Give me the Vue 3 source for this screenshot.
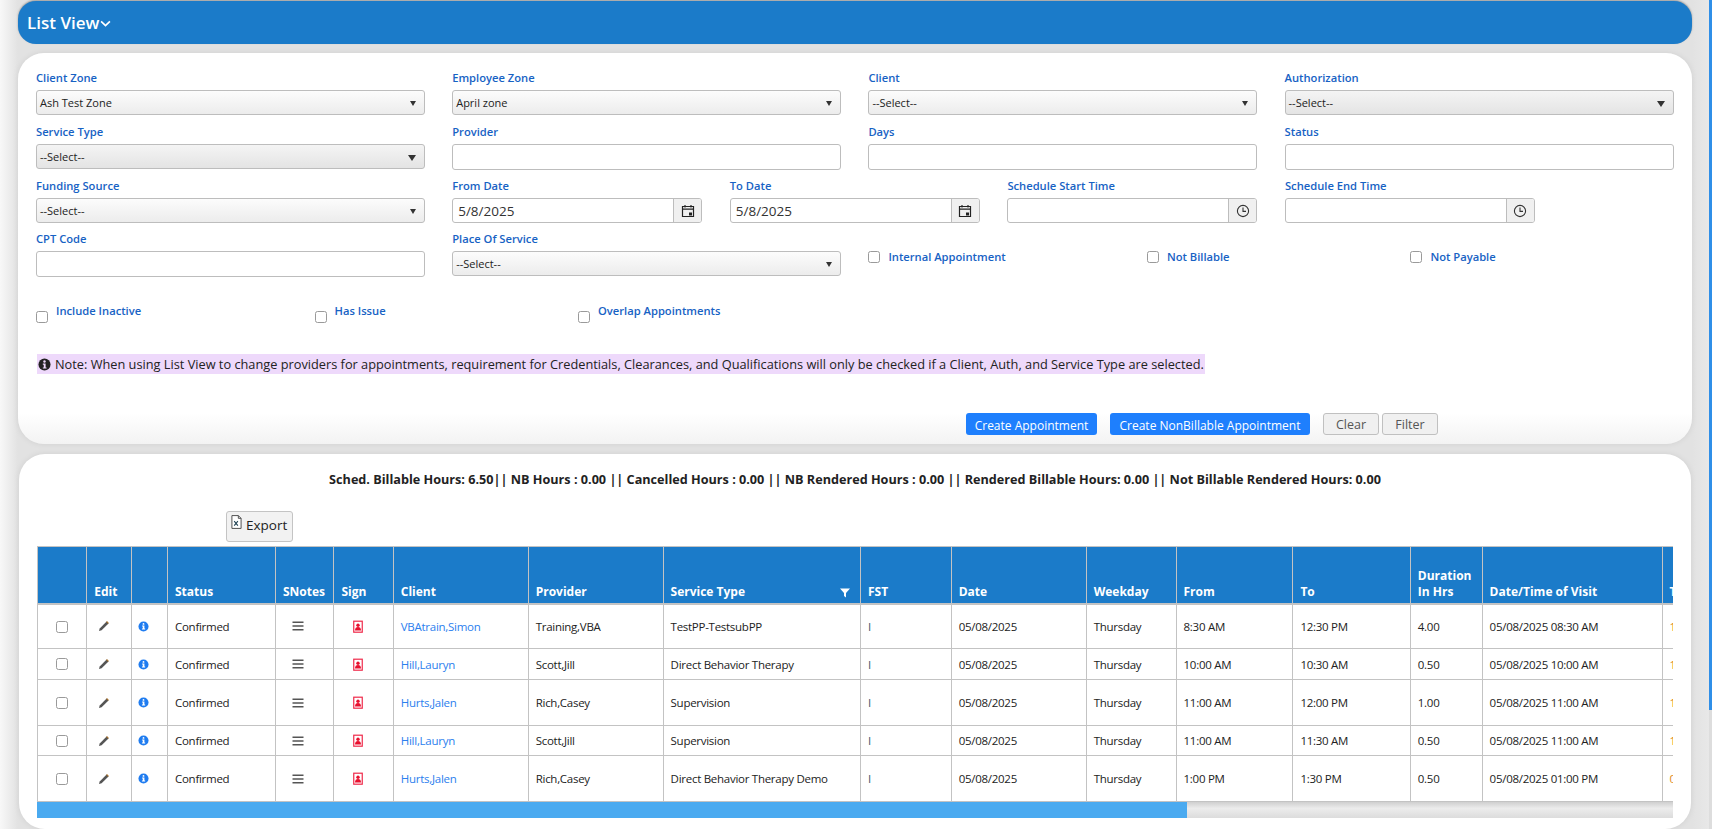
<script setup>
const columns = [
  { label: '', width: 49.2 },
  { label: 'Edit', width: 45 },
  { label: '', width: 35.8 },
  { label: 'Status', width: 108 },
  { label: 'SNotes', width: 58.5 },
  { label: 'Sign', width: 59.3 },
  { label: 'Client', width: 134.9 },
  { label: 'Provider', width: 134.9 },
  { label: 'Service Type', width: 197.4, filter: true },
  { label: 'FST', width: 90.7 },
  { label: 'Date', width: 135 },
  { label: 'Weekday', width: 89.9 },
  { label: 'From', width: 116.9 },
  { label: 'To', width: 117.4 },
  { label: 'Duration In Hrs', width: 71.8 },
  { label: 'Date/Time of Visit', width: 179.9 },
  { label: 'T', width: 90 }
]
const rows = [
  { h: 45, client: 'VBAtrain,Simon', provider: 'Training,VBA', service: 'TestPP-TestsubPP', from: '8:30 AM', to: '12:30 PM', dur: '4.00', visit: '05/08/2025 08:30 AM', last: '1' },
  { h: 31, client: 'Hill,Lauryn', provider: 'Scott,Jill', service: 'Direct Behavior Therapy', from: '10:00 AM', to: '10:30 AM', dur: '0.50', visit: '05/08/2025 10:00 AM', last: '1' },
  { h: 46, client: 'Hurts,Jalen', provider: 'Rich,Casey', service: 'Supervision', from: '11:00 AM', to: '12:00 PM', dur: '1.00', visit: '05/08/2025 11:00 AM', last: '1' },
  { h: 30, client: 'Hill,Lauryn', provider: 'Scott,Jill', service: 'Supervision', from: '11:00 AM', to: '11:30 AM', dur: '0.50', visit: '05/08/2025 11:00 AM', last: '1' },
  { h: 46, client: 'Hurts,Jalen', provider: 'Rich,Casey', service: 'Direct Behavior Therapy Demo', from: '1:00 PM', to: '1:30 PM', dur: '0.50', visit: '05/08/2025 01:00 PM', last: '0' }
]
</script>

<template>
  <div class="page">
    <div class="scroll-edge"><div class="scroll-thumb"></div></div>

    <header class="title-bar">
      <span class="title">List View</span>
      <svg class="chevron" viewBox="0 0 10 6" width="11" height="7"><path d="M1 1l4 4 4-4" fill="none" stroke="#fff" stroke-width="1.5" /></svg>
    </header>

    <section class="panel filters">
      <div class="form-grid">
        <div class="field">
          <label>Client Zone</label>
          <div class="select"><span>Ash Test Zone</span><i></i></div>
        </div>
        <div class="field">
          <label>Employee Zone</label>
          <div class="select"><span>April zone</span><i></i></div>
        </div>
        <div class="field">
          <label>Client</label>
          <div class="select"><span>--Select--</span><i></i></div>
        </div>
        <div class="field">
          <label>Authorization</label>
          <div class="select dark"><span>--Select--</span><i></i></div>
        </div>

        <div class="field">
          <label>Service Type</label>
          <div class="select dark"><span>--Select--</span><i></i></div>
        </div>
        <div class="field">
          <label>Provider</label>
          <input class="input" type="text" />
        </div>
        <div class="field">
          <label>Days</label>
          <input class="input" type="text" />
        </div>
        <div class="field">
          <label>Status</label>
          <input class="input" type="text" />
        </div>

        <div class="field">
          <label>Funding Source</label>
          <div class="select"><span>--Select--</span><i></i></div>
        </div>
        <div class="date-row">
          <div class="field">
            <label>From Date</label>
            <div class="group">
              <div class="group-text">5/8/2025</div>
              <div class="addon">
                <svg viewBox="0 0 14 14" width="14" height="14"><path d="M1.500 2.500h11v10h-11zM1.500 5.200h11M4 1v2.500M10 1v2.500" fill="none" stroke="#222" stroke-width="1.200" /><rect x="8" y="8.500" width="3" height="3" fill="#222" /></svg>
              </div>
            </div>
          </div>
          <div class="field">
            <label>To Date</label>
            <div class="group">
              <div class="group-text">5/8/2025</div>
              <div class="addon">
                <svg viewBox="0 0 14 14" width="14" height="14"><path d="M1.500 2.500h11v10h-11zM1.500 5.200h11M4 1v2.500M10 1v2.500" fill="none" stroke="#222" stroke-width="1.200" /><rect x="8" y="8.500" width="3" height="3" fill="#222" /></svg>
              </div>
            </div>
          </div>
          <div class="field">
            <label>Schedule Start Time</label>
            <div class="group">
              <div class="group-text"></div>
              <div class="addon">
                <svg viewBox="0 0 14 14" width="14" height="14"><circle cx="7" cy="7" r="5.600" fill="none" stroke="#333" stroke-width="1.100" /><path d="M7 3.500V7.400h3" fill="none" stroke="#333" stroke-width="1.100" /></svg>
              </div>
            </div>
          </div>
          <div class="field">
            <label>Schedule End Time</label>
            <div class="group">
              <div class="group-text"></div>
              <div class="addon">
                <svg viewBox="0 0 14 14" width="14" height="14"><circle cx="7" cy="7" r="5.600" fill="none" stroke="#333" stroke-width="1.100" /><path d="M7 3.500V7.400h3" fill="none" stroke="#333" stroke-width="1.100" /></svg>
              </div>
            </div>
          </div>
        </div>

        <div class="field">
          <label>CPT Code</label>
          <input class="input" type="text" />
        </div>
        <div class="field">
          <label>Place Of Service</label>
          <div class="select"><span>--Select--</span><i></i></div>
        </div>
        <div class="check-row inline">
          <label class="check"><input type="checkbox" /><span>Internal Appointment</span></label>
          <label class="check"><input type="checkbox" /><span>Not Billable</span></label>
          <label class="check"><input type="checkbox" /><span>Not Payable</span></label>
        </div>
      </div>

      <div class="check-row second">
        <label class="check low"><input type="checkbox" /><span>Include Inactive</span></label>
        <label class="check low"><input type="checkbox" /><span>Has Issue</span></label>
        <label class="check low"><input type="checkbox" /><span>Overlap Appointments</span></label>
      </div>

      <p class="note">
        <svg viewBox="0 0 14 14" width="13" height="13"><circle cx="7" cy="7" r="6.500" fill="#222" /><circle cx="7" cy="3.700" r="1.300" fill="#eed9fb" /><path d="M5.200 6h3v4.200h1v1.200H5.200v-1.200h1V7.200h-1z" fill="#eed9fb" /></svg>
        <span>Note: When using List View to change providers for appointments, requirement for Credentials, Clearances, and Qualifications will only be checked if a Client, Auth, and Service Type are selected.</span>
      </p>

      <div class="actions">
        <button class="btn primary first" type="button">Create Appointment</button>
        <button class="btn primary" type="button">Create NonBillable Appointment</button>
        <button class="btn plain clear" type="button">Clear</button>
        <button class="btn plain" type="button">Filter</button>
      </div>
    </section>

    <section class="panel results">
      <p class="summary">Sched. Billable Hours: 6.50|| NB Hours : 0.00 || Cancelled Hours : 0.00 || NB Rendered Hours : 0.00 || Rendered Billable Hours: 0.00 || Not Billable Rendered Hours: 0.00</p>

      <button class="export" type="button">
        <svg viewBox="0 0 12 15" width="11" height="14"><path d="M1 .5h7l3 3v11H1z" fill="#fff" stroke="#444" /><path d="M8 .5v3h3" fill="none" stroke="#444" /><path d="M3.500 6.500l4 5M7.500 6.500l-4 5" stroke="#245" stroke-width="1.200" /></svg>
        <span>Export</span>
      </button>

      <div class="table-wrap">
        <table class="grid">
          <colgroup>
            <col v-for="(c, i) in columns" :key="i" :style="{ width: c.width + 'px' }" />
          </colgroup>
          <thead>
            <tr>
              <th v-for="(c, i) in columns" :key="i">
                {{ c.label }}
                <svg v-if="c.filter" class="funnel" viewBox="0 0 10 10" width="10" height="10"><path d="M0 .5h10L6 5v4.500L4 8V5z" fill="#fff" /></svg>
              </th>
            </tr>
          </thead>
          <tbody>
            <tr v-for="(r, i) in rows" :key="i" :style="{ height: r.h + 'px' }">
              <td class="center"><input class="row-check" type="checkbox" /></td>
              <td class="icon-cell pad-edit">
                <svg class="ico" viewBox="0 0 12 12" width="12" height="12"><path d="M1 11l.7-2.600L8.600 1.500l1.900 1.900-6.900 6.900z" fill="#555" /><path d="M8.600 1.500l1.900 1.900" stroke="#a8702a" stroke-width="1.100" /></svg>
              </td>
              <td class="icon-cell pad-info">
                <svg class="ico" viewBox="0 0 12 12" width="11" height="11"><circle cx="6" cy="6" r="5.500" fill="#1f7cf0" /><circle cx="6" cy="3.200" r="1" fill="#fff" /><path d="M4.500 5h2.500v3.200h.8v1H4.300v-1h.9V6h-.7z" fill="#fff" /></svg>
              </td>
              <td>Confirmed</td>
              <td class="icon-cell pad-notes">
                <svg class="ico" viewBox="0 0 12 10" width="12" height="10"><path d="M.5 1.200h11M.5 5h11M.5 8.800h11" stroke="#555" stroke-width="1.500" /></svg>
              </td>
              <td class="icon-cell pad-sign">
                <svg class="ico" viewBox="0 0 10 13" width="10" height="13"><rect x=".75" y="1.200" width="8.500" height="11" fill="none" stroke="#ef2a4a" stroke-width="1.200" /><circle cx="5" cy="5.200" r="1.700" fill="#e8102e" /><path d="M2 10.500c0-2.500 1.200-3.500 3-3.500s3 1 3 3.500z" fill="#e8102e" /></svg>
              </td>
              <td class="link">{{ r.client }}</td>
              <td>{{ r.provider }}</td>
              <td>{{ r.service }}</td>
              <td class="fst">I</td>
              <td>05/08/2025</td>
              <td>Thursday</td>
              <td>{{ r.from }}</td>
              <td>{{ r.to }}</td>
              <td>{{ r.dur }}</td>
              <td>{{ r.visit }}</td>
              <td class="tail">{{ r.last }}</td>
            </tr>
          </tbody>
        </table>
        <div class="h-scroll"><div class="h-thumb"></div></div>
      </div>
    </section>
  </div>
</template>

<style>
html, body { margin: 0; padding: 0; overflow: hidden; }
</style>

<style scoped>
.page {
  position: relative;
  width: 1712px;
  height: 829px;
  overflow: hidden;
  box-sizing: border-box;
  padding: 1px 20px 0 18px;
  background: linear-gradient(90deg, #f8f8f8 0, #e2e2e2 18px, #e2e2e2 1692px, #e8e8e8 1710px);
  font-family: "Open Sans", "Noto Sans", sans-serif;
  color: #222;
}
.scroll-edge {
  position: absolute;
  top: 0;
  right: 0;
  width: 3px;
  height: 100%;
  background: #ddd;
}
.scroll-thumb { height: 710px; background: #2f8fe8; }

.title-bar {
  height: 43px;
  display: flex;
  align-items: center;
  gap: 1px;
  padding-left: 9px;
  border-radius: 18px;
  background: #1b7bc9;
  box-shadow: 0 -1px 2px #999;
}
.title { font-size: 17px; font-weight: 600; color: #fff; }
.chevron { margin-top: 2px; }

.panel {
  background: #fff;
  border-radius: 26px;
  box-shadow: 0 0 6px rgba(0, 0, 0, .08);
}
.filters {
  height: 391px;
  margin-top: 9px;
  padding: 17px 18px 0;
  box-sizing: border-box;
  background: linear-gradient(180deg, #fff 360px, #f3f3f3 391px);
  display: flex;
  flex-direction: column;
}
.form-grid {
  display: grid;
  grid-template-columns: repeat(4, 389px);
  grid-template-rows: 45px 45px 44px 45px;
  column-gap: 27.200px;
  row-gap: 9px;
}
.field label {
  display: block;
  height: 20px;
  line-height: 16px;
  font-size: 11.200px;
  font-weight: 600;
  color: #1762c4;
  white-space: nowrap;
}
.select {
  position: relative;
  box-sizing: border-box;
  height: 25px;
  padding-left: 3px;
  display: flex;
  align-items: center;
  font-size: 11px;
  color: #222;
  border: 1px solid #bdbdbd;
  border-radius: 3px;
  background: linear-gradient(180deg, #fcfcfc, #ececec);
}
.select.dark { background: linear-gradient(180deg, #f4f4f4, #e4e4e4); }
.select i {
  position: absolute;
  right: 8px;
  top: 10px;
  width: 0;
  height: 0;
  border-left: 3px solid transparent;
  border-right: 3px solid transparent;
  border-top: 5px solid #333;
}
.select.dark i {
  border-left-width: 4px;
  border-right-width: 4px;
  border-top-width: 6px;
}
.input {
  display: block;
  width: 100%;
  height: 26px;
  box-sizing: border-box;
  border: 1px solid #bdbdbd;
  border-radius: 3px;
  background: #fff;
  outline: none;
}
.date-row {
  grid-column: span 3;
  display: grid;
  grid-template-columns: repeat(4, 250px);
  column-gap: 27.600px;
}
.group {
  display: flex;
  height: 25px;
  box-sizing: border-box;
  border: 1px solid #bdbdbd;
  border-radius: 3px;
  overflow: hidden;
}
.group-text {
  flex: 1;
  padding-left: 5px;
  font-size: 13.500px;
  line-height: 24px;
  color: #333;
}
.addon {
  width: 27px;
  display: flex;
  align-items: center;
  justify-content: center;
  background: #f0f0f0;
  border-left: 1px solid #bdbdbd;
}

.check-row {
  display: grid;
  grid-template-columns: 278.500px 263.500px 1fr;
}
.check-row.inline {
  grid-column: span 2;
  align-self: start;
  padding-top: 19px;
}
.check-row.second { margin-top: 34px; }
.check {
  display: flex;
  align-items: center;
  gap: 8px;
  font-size: 11.200px;
  font-weight: 600;
  color: #1762c4;
  line-height: 14px;
}
.check input, .row-check {
  appearance: none;
  box-sizing: border-box;
  width: 12px;
  height: 12px;
  margin: 0;
  border: 1px solid #9a9a9a;
  border-radius: 2.500px;
  background: #fff;
  flex: none;
}
.check.low span { position: relative; bottom: 6px; }
.check.low { height: 14px; }
.note {
  margin: 30px 0 0 1px;
  align-self: flex-start;
  height: 20px;
  width: 1168px;
  box-sizing: border-box;
  display: flex;
  align-items: center;
  gap: 4px;
  font-size: 12.780px;
  white-space: nowrap;
  background: #eed9fb;
  color: #222;
}
.note svg { flex: none; margin-left: 1px; }
.actions {
  display: flex;
  margin: 39px 0 0 930px;
  height: 22px;
}
.btn {
  box-sizing: border-box;
  height: 22px;
  padding: 0;
  font-family: inherit;
  font-size: 12.500px;
  border-radius: 3px;
  white-space: nowrap;
}
.primary {
  width: 131px;
  border: 0;
  padding-top: 2px;
  background: #1e7ffd;
  color: #fff;
  font-size: 12px;
}
.primary.first { margin-right: 13px; }
.primary + .primary { width: 200px; margin-right: 13px; }
.plain {
  width: 56px;
  border: 1px solid #c0c0c0;
  background: #f0f0f0;
  color: #555;
}
.clear { margin-right: 3px; }

.results {
  height: 375px;
  margin-top: 10px;
  padding-top: 1px;
  box-sizing: border-box;
  margin-left: 1px;
  margin-right: 1px;
  position: relative;
}
.summary {
  margin: 14px 0 0;
  text-align: center;
  font-size: 12.650px;
  font-weight: 700;
  line-height: 20px;
  color: #222;
}
.export {
  display: flex;
  align-items: flex-start;
  gap: 4px;
  box-sizing: border-box;
  width: 67px;
  height: 31px;
  margin: 22px 0 0 207px;
  padding: 3px 4px;
  font-family: inherit;
  font-size: 13.500px;
  line-height: 20px;
  color: #222;
  background: #f2f2f2;
  border: 1px solid #c4c4c4;
  border-radius: 3px;
}
.table-wrap {
  width: 1636px;
  margin: 4px 0 0 18px;
  overflow: hidden;
}
.grid {
  table-layout: fixed;
  width: 1675.500px;
  border-collapse: collapse;
  font-size: 11.500px;
  color: #222;
}
.grid th {
  height: 57px;
  box-sizing: border-box;
  position: relative;
  vertical-align: bottom;
  text-align: left;
  padding: 0 7px 3px 7px;
  background: #1b7bc9;
  color: #fff;
  font-size: 12px;
  font-weight: 700;
  line-height: 16px;
  border: 1px solid #c3c3c3;
  border-bottom-width: 2px;
}
.funnel { position: absolute; right: 10px; bottom: 5px; }
.grid td {
  padding: 0 7px;
  border: 1px solid #c3c3c3;
  white-space: nowrap;
  overflow: hidden;
  vertical-align: middle;
  letter-spacing: -0.270px;
}
.grid td.center { text-align: center; padding: 0; }
.grid td.icon-cell { padding-right: 0; }
.grid td.pad-edit { padding-left: 11px; }
.grid td.pad-info { padding-left: 6px; }
.grid td.pad-notes { padding-left: 16px; }
.grid td.pad-sign { padding-left: 19px; }
.ico { display: block; }
.row-check { display: inline-block; vertical-align: middle; position: relative; bottom: 1px; }
.link { color: #2c80ee; }
.fst { color: #44586e; }
.tail { color: #e08a1a; }
.h-scroll {
  height: 16px;
  background: linear-gradient(180deg, #cfcfcf, #ececec 40%, #dcdcdc);
}
.h-thumb { width: 1150px; height: 100%; background: #4aaaf0; }
</style>
